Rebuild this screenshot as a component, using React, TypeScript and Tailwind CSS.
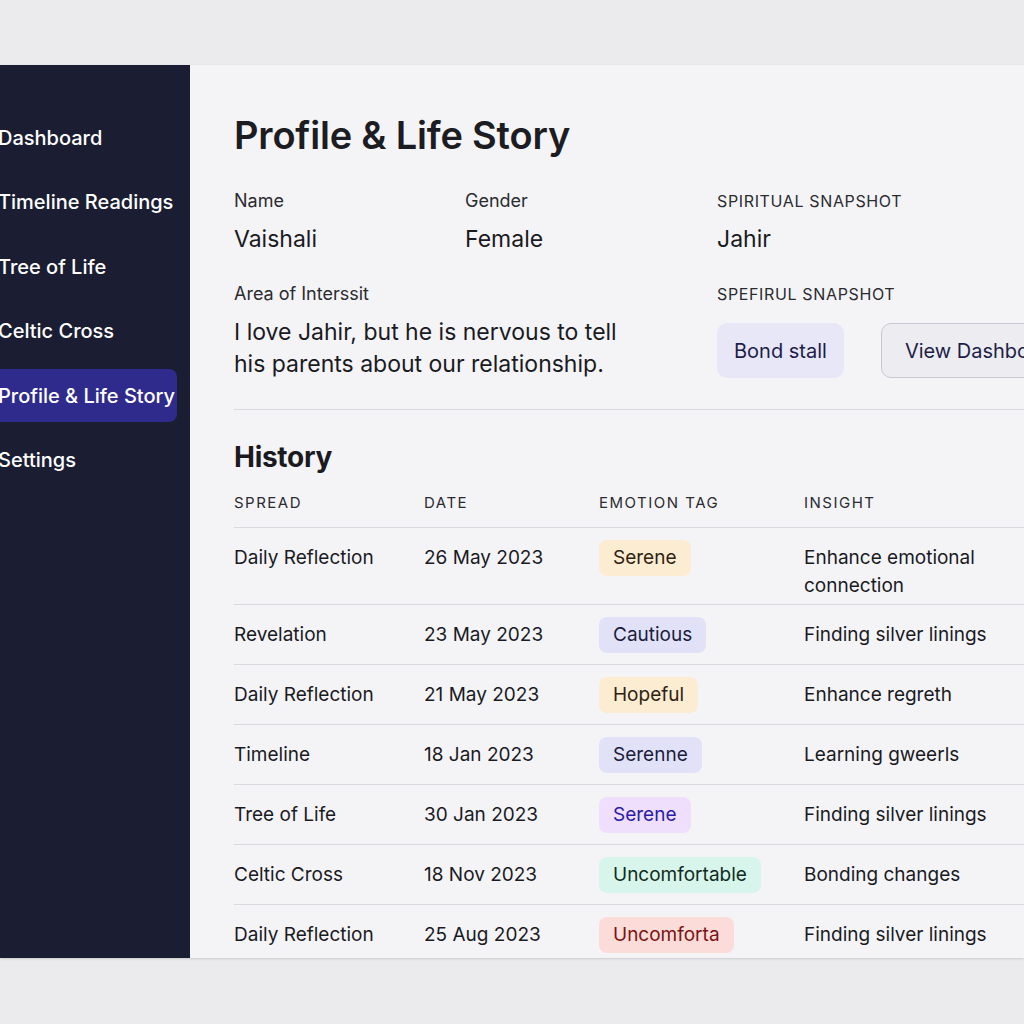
const navItems = [
  'Dashboard',
  'Timeline Readings',
  'Tree of Life',
  'Celtic Cross',
  'Profile & Life Story',
  'Settings',
];

type Tone = 'amber' | 'indigo' | 'purple' | 'green' | 'red';

const toneClass: Record<Tone, string> = {
  amber: 'bg-[#fcecd2] text-[#2e2210]',
  indigo: 'bg-[#e1e2f8] text-[#1b1c3d]',
  purple: 'bg-[#efdefc] text-[#2a1ca8]',
  green: 'bg-[#d8f5ec] text-[#0f2c20]',
  red: 'bg-[#fbdcd8] text-[#7c1212]',
};

const rows: { spread: string; date: string; tag: string; tone: Tone; insight: string }[] = [
  { spread: 'Daily Reflection', date: '26 May 2023', tag: 'Serene', tone: 'amber', insight: 'Enhance emotional connection' },
  { spread: 'Revelation', date: '23 May 2023', tag: 'Cautious', tone: 'indigo', insight: 'Finding silver linings' },
  { spread: 'Daily Reflection', date: '21 May 2023', tag: 'Hopeful', tone: 'amber', insight: 'Enhance regreth' },
  { spread: 'Timeline', date: '18 Jan 2023', tag: 'Serenne', tone: 'indigo', insight: 'Learning gweerls' },
  { spread: 'Tree of Life', date: '30 Jan 2023', tag: 'Serene', tone: 'purple', insight: 'Finding silver linings' },
  { spread: 'Celtic Cross', date: '18 Nov 2023', tag: 'Uncomfortable', tone: 'green', insight: 'Bonding changes' },
  { spread: 'Daily Reflection', date: '25 Aug 2023', tag: 'Uncomforta', tone: 'red', insight: 'Finding silver linings' },
];

export default function App() {
  return (
    <div
      className="h-screen bg-[#ebebed] pt-[65px] overflow-hidden"
      style={{ fontFamily: 'Inter, "Noto Sans", sans-serif' }}
    >
      <div className="flex h-[893px] w-full overflow-hidden shadow-sm">
        <Sidebar />
        <main className="flex-1 bg-[#f4f4f7] pl-[44px] overflow-hidden">
          <h1 className="mt-[48px] text-[38px] leading-[44px] font-semibold text-[#1c1c22] tracking-[-0.005em] whitespace-nowrap">
            Profile &amp; Life Story
          </h1>
          <Profile />
          <div className="mt-[29px] w-[900px] border-t border-[#d9d9de]" />
          <History />
        </main>
      </div>
    </div>
  );
}

function Sidebar() {
  return (
    <aside className="w-[190px] shrink-0 bg-[#1b1e33] pt-[46px]">
      <nav className="-ml-[12px] w-[189px] flex flex-col gap-[11.6px]">
        {navItems.map((item) => (
          <div
            key={item}
            className={
              'h-[53px] flex items-center pl-[10px] rounded-[8px] text-[20px] font-medium text-white whitespace-nowrap ' +
              (item === 'Profile & Life Story' ? 'bg-[#2f2b8c]' : '')
            }
          >
            {item}
          </div>
        ))}
      </nav>
    </aside>
  );
}

function Profile() {
  return (
    <div className="mt-[32px] flex text-[#1a1a1f]">
      <div className="w-[483px] shrink-0">
        <div className="flex">
          <div className="w-[231px]">
            <p className="text-[18px] leading-[24px] text-[#2b2b30]">Name</p>
            <p className="mt-[12px] text-[23px] leading-[28px]">Vaishali</p>
          </div>
          <div>
            <p className="text-[18px] leading-[24px] text-[#2b2b30]">Gender</p>
            <p className="mt-[12px] text-[23px] leading-[28px]">Female</p>
          </div>
        </div>
        <p className="mt-[29px] text-[18px] leading-[24px] text-[#2b2b30]">Area of Interssit</p>
        <p className="mt-[10px] max-w-[405px] text-[23px] leading-[32px]">
          I love Jahir, but he is nervous to tell his parents about our relationship.
        </p>
      </div>
      <div className="shrink-0">
        <p className="text-[16px] leading-[24px] tracking-[0.04em] text-[#2b2b30]">SPIRITUAL SNAPSHOT</p>
        <p className="mt-[12px] text-[23px] leading-[28px]">Jahir</p>
        <p className="mt-[29px] text-[16px] leading-[24px] tracking-[0.04em] text-[#2b2b30]">SPEFIRUL SNAPSHOT</p>
        <div className="mt-[17px] flex gap-[37px]">
          <div className="h-[55px] px-[17px] flex items-center rounded-[10px] bg-[#e7e7f7] text-[20px] text-[#1d1e48]">
            Bond stall
          </div>
          <div className="h-[55px] px-[23px] flex items-center rounded-[10px] border border-[#c9c9d4] bg-[#ececf1] text-[20px] text-[#1d1e48] whitespace-nowrap">
            View Dashboard
          </div>
        </div>
      </div>
    </div>
  );
}

function History() {
  return (
    <section className="w-[810px]">
      <h2 className="mt-[30px] text-[28px] leading-[34px] font-bold text-[#1a1a1f] tracking-[-0.01em]">History</h2>
      <div className="mt-[17px] flex pb-[12px] border-b border-[#d9d9de] text-[15px] leading-[24px] tracking-[0.1em] text-[#2b2b30]">
        <div className="w-[190px]">SPREAD</div>
        <div className="w-[175px]">DATE</div>
        <div className="w-[205px]">EMOTION TAG</div>
        <div className="w-[220px]">INSIGHT</div>
      </div>
      {rows.map((r, i) => (
        <div
          key={i}
          className={
            'flex items-start border-b border-[#d9d9de] text-[19px] text-[#1a1a1f] ' +
            (i === 0 ? 'pt-[12px] pb-[12px]' : 'pt-[12px] pb-[11px]')
          }
        >
          <div className="w-[190px] h-[36px] flex items-center">{r.spread}</div>
          <div className="w-[175px] h-[36px] flex items-center">{r.date}</div>
          <div className="w-[205px] h-[36px] flex items-center">
            <span className={'h-[36px] px-[14px] flex items-center rounded-[8px] ' + toneClass[r.tone]}>{r.tag}</span>
          </div>
          <div className="w-[200px] pt-[4px] -mb-[8px] leading-[28px]">{r.insight}</div>
        </div>
      ))}
    </section>
  );
}
